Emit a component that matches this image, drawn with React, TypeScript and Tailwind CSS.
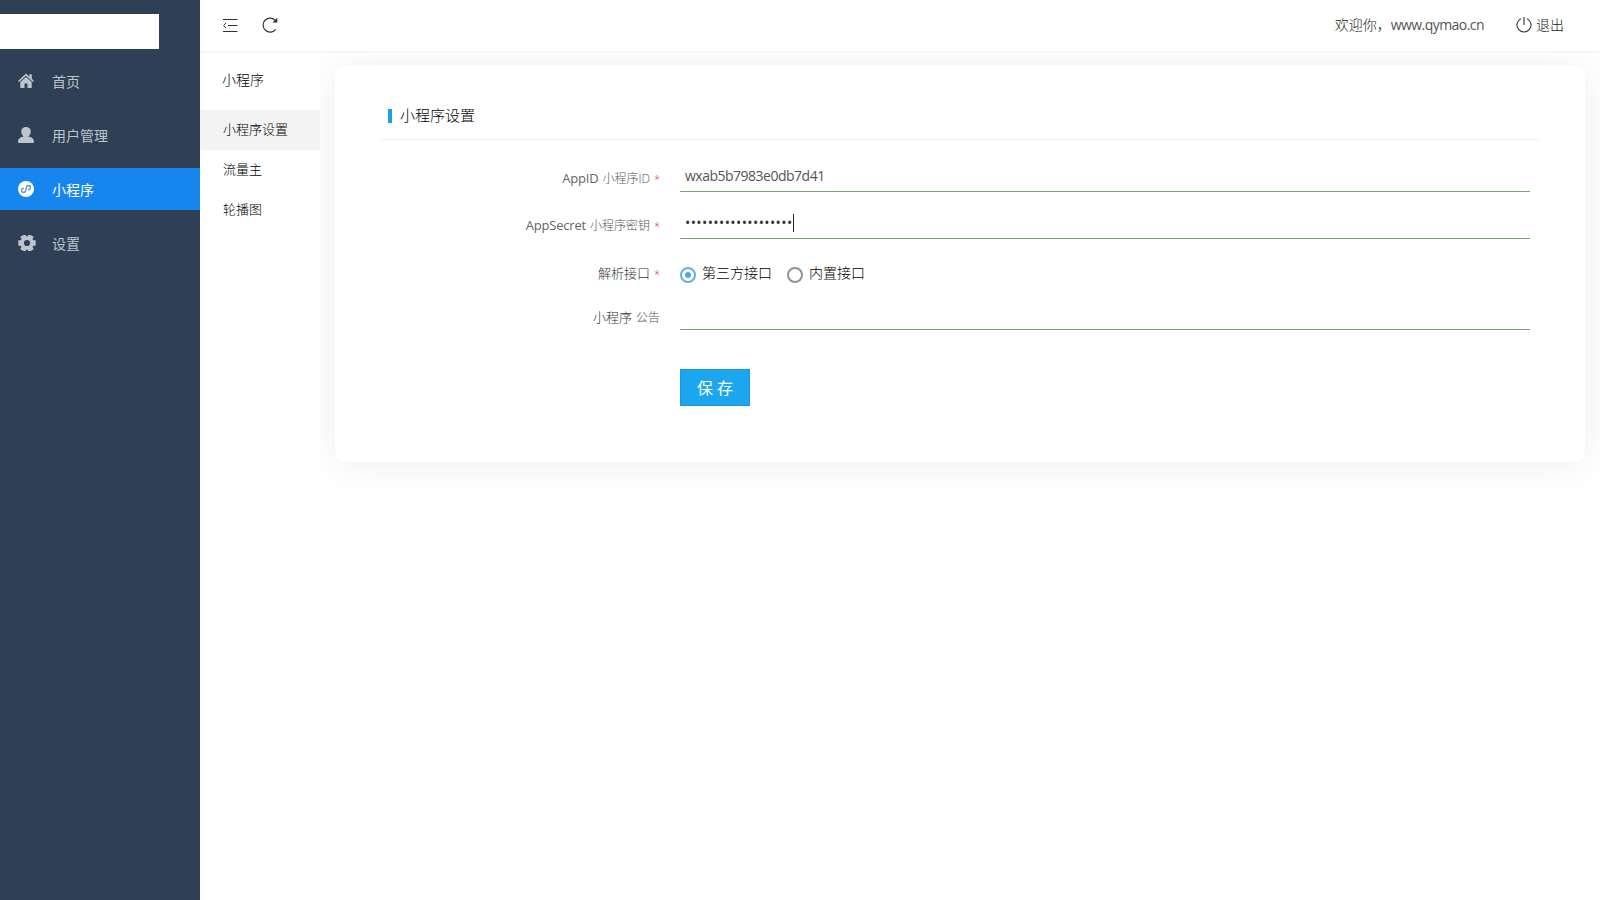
import type { ReactNode } from "react";
import clsx from "clsx";

const HomeIcon = () => (
  <svg viewBox="0 0 16 16" className="h-4 w-4" fill="currentColor">
    <path d="M8 .4 0 7.900l1.100 1.200L8 2.800l6.900 6.300L16 7.900l-2.200-2.100V1.300h-2.400v2.300z" />
    <path d="M8 3.900 2.300 9.100V15h4.200v-4.400h3V15h4.200V9.100z" />
  </svg>
);

const UserIcon = () => (
  <svg viewBox="0 0 16 16" className="h-4 w-4" fill="currentColor">
    <ellipse cx="8" cy="4.800" rx="4.800" ry="4.900" />
    <path d="M5.500 8.600h5v1c2.900.5 5.200 1.800 5.500 4.600.1 1.100-.4 1.800-1.200 1.800H1.200C.4 16-.1 15.300 0 14.200c.3-2.800 2.600-4.100 5.500-4.600z" />
  </svg>
);

const MiniProgramIcon = () => (
  <svg viewBox="0 0 16 16" className="h-4 w-4">
    <circle cx="8" cy="8" r="8" fill="currentColor" />
    <path
      d="M5.600 7.600a2.100 2.100 0 1 0 2.400 2.100V6.300a2.100 2.100 0 1 1 2.400 2.100"
      fill="none"
      stroke="#3a7fbf"
      strokeWidth="1.100"
      strokeLinecap="round"
      transform="rotate(10 8 8)"
    />
  </svg>
);

const GearIcon = () => (
  <svg viewBox="0 0 18 16" className="h-4 w-[18px]" fill="none" stroke="currentColor">
    <circle cx="9" cy="8" r="4.900" strokeWidth="3.600" />
    <g strokeWidth="5.600">
      <path d="M.3 8h3.200M14.500 8h3.200" />
      <path d="M.3 8h3.200M14.500 8h3.200" transform="rotate(60 9 8)" />
      <path d="M.3 8h3.200M14.500 8h3.200" transform="rotate(120 9 8)" />
    </g>
  </svg>
);

const menu: { label: string; icon: ReactNode; active?: boolean }[] = [
  { label: "首页", icon: <HomeIcon /> },
  { label: "用户管理", icon: <UserIcon /> },
  { label: "小程序", icon: <MiniProgramIcon />, active: true },
  { label: "设置", icon: <GearIcon /> },
];

const subMenu = ["小程序设置", "流量主", "轮播图"];

function Sidebar() {
  return (
    <aside className="w-[200px] shrink-0 bg-[#2f4056] pt-3.5 font-normal">
      <div className="h-[35px] w-[159px] bg-white" />
      <nav className="mt-[11px] flex flex-col gap-3">
        {menu.map((item) => (
          <a
            key={item.label}
            className={clsx(
              "flex h-[42px] items-center pl-[18px] text-sm",
              item.active ? "bg-[#1685ee] text-white" : "text-[#bdc4cc]"
            )}
          >
            <span className="w-[34px]">{item.icon}</span>
            <span className="pt-px">{item.label}</span>
          </a>
        ))}
      </nav>
    </aside>
  );
}

function Header() {
  return (
    <header className="z-10 flex h-[53px] shrink-0 items-center justify-between border-b-2 border-[#f6f6f6] bg-white pr-9 pb-0.5 pl-[23px] text-sm text-[#222]">
      <div className="flex items-center gap-6">
        <svg viewBox="0 0 15 13" className="mt-px h-[13px] w-[15px]" fill="none" stroke="#333">
          <path d="M0 .5h14.500M5 6.500h9.500M0 12.500h14.500M3 4 .7 6.500 3 9" />
        </svg>
        <svg viewBox="0 0 16 16" className="h-4 w-4" fill="none" stroke="#333" strokeWidth="1.2">
          <path d="M13.700 12.300A7 7 0 1 1 13.500 3.600" />
          <path d="M15.300.8v4.800h-4.800z" fill="#333" stroke="none" />
        </svg>
      </div>
      <div className="flex items-center">
        <span>欢迎你，</span>
        <span className="font-normal tracking-[-0.55px] text-[#555]">www.qymao.cn</span>
        <svg
          viewBox="0 0 16 16"
          className="mr-1 ml-8 h-4 w-4"
          fill="none"
          stroke="#333"
          strokeWidth="1.100"
        >
          <path d="M8 0v8M4.800 1.700a7 7 0 1 0 6.400 0" />
        </svg>
        <span>退出</span>
      </div>
    </header>
  );
}

function SubNav() {
  return (
    <div className="z-10 w-[120px] shrink-0 bg-white text-[13px] text-black">
      <div className="flex h-[57px] items-center pb-1 pl-[22px] text-sm">小程序</div>
      {subMenu.map((label, i) => (
        <div
          key={label}
          className={clsx("flex h-10 items-center pl-[23px]", i === 0 && "bg-[#f3f3f3]")}
        >
          {label}
        </div>
      ))}
    </div>
  );
}

interface LabelProps {
  name: string;
  hint?: string;
  required?: boolean;
}

function Label({ name, hint, required }: LabelProps) {
  // Latin names are set heavier than the Chinese ones
  const latin = /^[A-Za-z]+$/.test(name);
  return (
    <div className="w-[280px] shrink-0 text-right text-[13px] leading-5 text-[#333]">
      <span className={clsx(latin && "font-normal tracking-[-0.2px] text-[#666]")}>{name}</span>
      {hint && <span className="ml-1 text-xs text-[#555]">{hint}</span>}
      {required && <span className="ml-1 text-[11px] text-[#e02020]">*</span>}
    </div>
  );
}

function Radio({ label, checked }: { label: string; checked?: boolean }) {
  return (
    <label className="flex items-center text-sm text-black">
      <span
        className={clsx(
          "mt-1 mr-1.5 flex h-4 w-4 items-center justify-center rounded-full border-2",
          checked ? "border-[#64afe5]" : "border-[#929292]"
        )}
      >
        {checked && <span className="h-1.5 w-1.5 rounded-full bg-[#57a5dd]" />}
      </span>
      {label}
    </label>
  );
}

function SettingsCard() {
  return (
    <section className="h-[397px] rounded-[10px] bg-white px-[46px] pt-[30px] shadow-[0_2px_40px_rgba(0,0,0,0.07)]">
      <div className="flex h-[45px] items-center border-b border-[#eee] pb-1 pl-[7px] text-[15px] text-black">
        <span className="mt-px mr-2 h-3.5 w-1 bg-[#1ba0e0]" />
        小程序设置
      </div>

      <div className="-ml-px flex h-[52px] items-end gap-5 text-sm text-[#555]">
        <div className="pb-[3px]">
          <Label name="AppID" hint="小程序ID" required />
        </div>
        <div className="h-[31px] w-[850px] shrink-0 border-b border-[#73a56f] pl-[5px] leading-[30px] font-normal tracking-[-0.5px]">
          wxab5b7983e0db7d41
        </div>
      </div>

      <div className="-ml-px flex h-[47px] items-end gap-5 text-sm">
        <div className="pb-[3px]">
          <Label name="AppSecret" hint="小程序密钥" required />
        </div>
        <div className="flex h-[31px] w-[850px] shrink-0 items-center border-b border-[#73a56f] pl-[5px]">
          <span className="font-normal tracking-[0.4px] text-[#333]">{"•".repeat(19)}</span>
          <span className="h-[18px] w-px bg-[#222]" />
        </div>
      </div>

      <div className="-ml-px flex h-[68px] items-center gap-5">
        <Label name="解析接口" required />
        <div className="flex gap-[15px]">
          <Radio label="第三方接口" checked />
          <Radio label="内置接口" />
        </div>
      </div>

      <div className="-ml-px flex h-[23px] items-end gap-5">
        <div className="pb-[3px]">
          <Label name="小程序" hint="公告" />
        </div>
        <div className="h-[31px] w-[850px] shrink-0 border-b border-[#73a56f]" />
      </div>

      <button className="mt-[39px] ml-[299px] block h-[37px] w-[70px] border border-[#1c95dc] bg-[#1ba6ef] text-base font-normal text-white">
        保&nbsp;存
      </button>
    </section>
  );
}

export default function App() {
  return (
    <div className="flex h-screen overflow-hidden bg-white font-['Open_Sans','Noto_Sans_CJK_SC',sans-serif] font-light">
      <Sidebar />
      <div className="flex min-w-0 flex-1 flex-col">
        <Header />
        <div className="flex min-h-0 flex-1">
          <SubNav />
          <main className="min-w-0 flex-1 px-[15px] pt-3">
            <SettingsCard />
          </main>
        </div>
      </div>
    </div>
  );
}
